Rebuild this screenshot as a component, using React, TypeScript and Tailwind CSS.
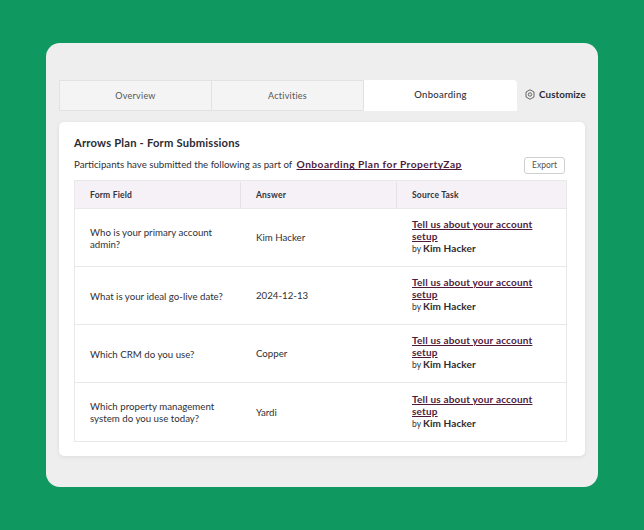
const rows = [
  { field: "Who is your primary account admin?", answer: "Kim Hacker" },
  { field: "What is your ideal go-live date?", answer: "2024-12-13" },
  { field: "Which CRM do you use?", answer: "Copper" },
  { field: "Which property management system do you use today?", answer: "Yardi" },
];

function HexIcon() {
  return (
    <svg width="10" height="11" viewBox="0 0 20 22" fill="none" stroke="#444" strokeWidth="1.6" strokeLinejoin="round">
      <path d="M10 1.5 18 6v10l-8 4.5L2 16V6z" />
      <circle cx="10" cy="11" r="3.4" />
    </svg>
  );
}

export default function App() {
  return (
    <div className="w-[644px] h-[530px] overflow-hidden bg-[#0f9960] pt-[43px] pl-[46px] font-['Lato',sans-serif] text-[#2f2f36]">
      <div className="w-[552px] h-[444px] rounded-[14px] bg-[#eeeeee] pt-[37px] pl-[13px]">
        <div className="flex h-[31px] items-stretch">
          <div className="w-[153px] flex items-center justify-center border border-[#e2e2e2] bg-[#f4f4f4] text-[9px] text-[#555] tracking-[0.25px]">Overview</div>
          <div className="w-[152px] flex items-center justify-center border-y border-r border-[#e2e2e2] bg-[#f4f4f4] text-[9px] text-[#555] tracking-[0.25px]">Activities</div>
          <div className="w-[153px] flex items-center justify-center bg-white text-[9.5px] font-medium tracking-[0.3px] rounded-tr-sm">Onboarding</div>
          <div className="flex items-center gap-[4px] pl-[8px] pb-[2px] text-[9.8px] font-bold tracking-[0.1px] text-[#2b2b33]">
            <HexIcon />
            Customize
          </div>
        </div>

        <div className="mt-[11px] w-[526px] h-[334px] rounded-[5px] bg-white shadow-[0_1px_4px_rgba(0,0,0,0.08)] pt-[14px] pl-[15px]">
          <div className="text-[11.2px] font-bold leading-[14px] tracking-[0.2px] text-[#2b2b33]">Arrows Plan - Form Submissions</div>
          <div className="flex items-center w-[491px] h-[18px] mt-[6px] text-[9.7px]">
            <span className="flex-1">
              Participants have submitted the following as part of{" "}
              <a className="ml-[2px] text-[10.2px] tracking-[0.47px] font-bold text-[#4f1a3c] underline">Onboarding Plan for PropertyZap</a>
            </span>
            <button className="w-[41px] h-[17px] rounded-[3px] border border-[#cfcfcf] bg-white text-[8.5px] text-[#555]">Export</button>
          </div>

          <div className="mt-[6px] w-[493px] border border-[#e8e8e8]">
            <div className="grid grid-cols-[166px_156px_1fr] h-[27px] bg-[#f5f1f7] pt-[1px] text-[8.5px] font-bold tracking-[0.2px] text-[#33333a]">
              <div className="flex items-center pl-[15px] border-r border-[#e4e2e6]">Form Field</div>
              <div className="flex items-center pl-[15px] border-r border-[#e4e2e6]">Answer</div>
              <div className="flex items-center pl-[15px]">Source Task</div>
            </div>
            {rows.map((row, i) => (
              <div
                key={row.field}
                className={`grid grid-cols-[166px_156px_1fr] items-center border-t border-[#e8e8e8] text-[9.7px] ${i === 3 ? "h-[59px]" : "h-[58px]"}`}
              >
                <div className="pl-[15px] pr-[12px] leading-[12px]">{row.field}</div>
                <div className="pl-[15px]">{row.answer}</div>
                <div className="pl-[15px] pr-[30px] mb-[2px]">
                  <a className="block text-[10px] font-bold text-[#4f1a3c] underline leading-[12px] tracking-[0.18px]">Tell us about your account setup</a>
                  <div className="leading-[12px] text-[8.5px]">
                    by <span className="text-[10px] font-bold tracking-[0.1px] text-[#2b2b33]">Kim Hacker</span>
                  </div>
                </div>
              </div>
            ))}
          </div>
        </div>
      </div>
    </div>
  );
}
